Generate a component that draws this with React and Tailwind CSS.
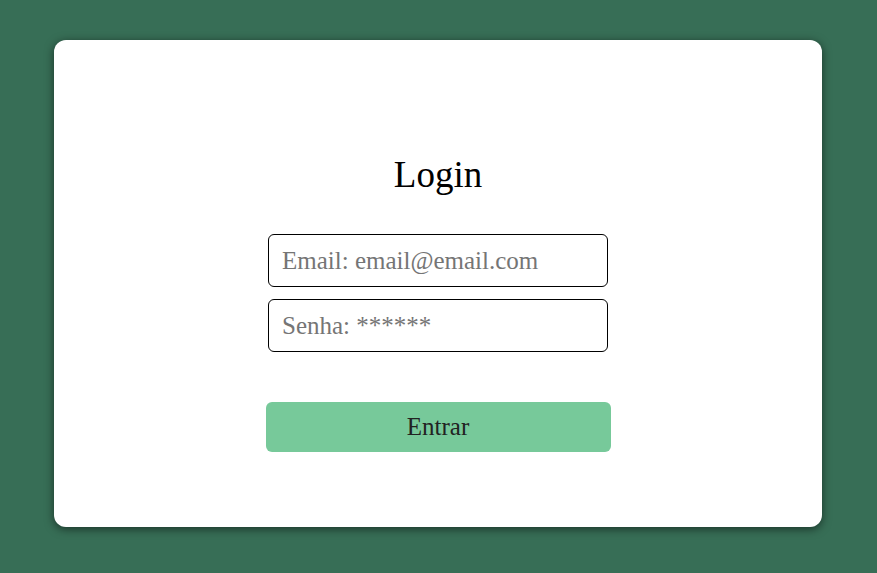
import React, { useState } from 'react';

const App = () => {
  const [email, setEmail] = useState('');
  const [senha, setSenha] = useState('');

  return (
    <div className="min-h-screen w-full bg-[#376e56] pt-10" style={{ fontFamily: '"Liberation Serif", "Times New Roman", serif' }}>
      <div className="ml-[54px] flex h-[487px] w-[768px] flex-col items-center rounded-xl bg-white pt-[113px] shadow-[0_2px_10px_rgba(0,0,0,0.55)]">
        <h1 className="text-[37px] leading-[44px] text-black">Login</h1>

        <form className="mt-[37px] flex flex-col items-center" onSubmit={(e) => e.preventDefault()}>
          <input
            type="email"
            value={email}
            onChange={(e) => setEmail(e.target.value)}
            placeholder="Email: email@email.com"
            className="h-[53px] w-[340px] rounded-md border border-black px-[13px] text-[25px] text-black outline-none placeholder:text-[#757575]"
          />
          <input
            type="password"
            value={senha}
            onChange={(e) => setSenha(e.target.value)}
            placeholder="Senha: ******"
            className="mt-3 h-[53px] w-[340px] rounded-md border border-black px-[13px] text-[25px] text-black outline-none placeholder:text-[#757575]"
          />
          <button
            type="submit"
            className="mt-[50px] h-[50px] w-[345px] rounded-md bg-[#77c99a] text-[25px] text-[#222]"
          >
            Entrar
          </button>
        </form>
      </div>
    </div>
  );
};

export default App;
